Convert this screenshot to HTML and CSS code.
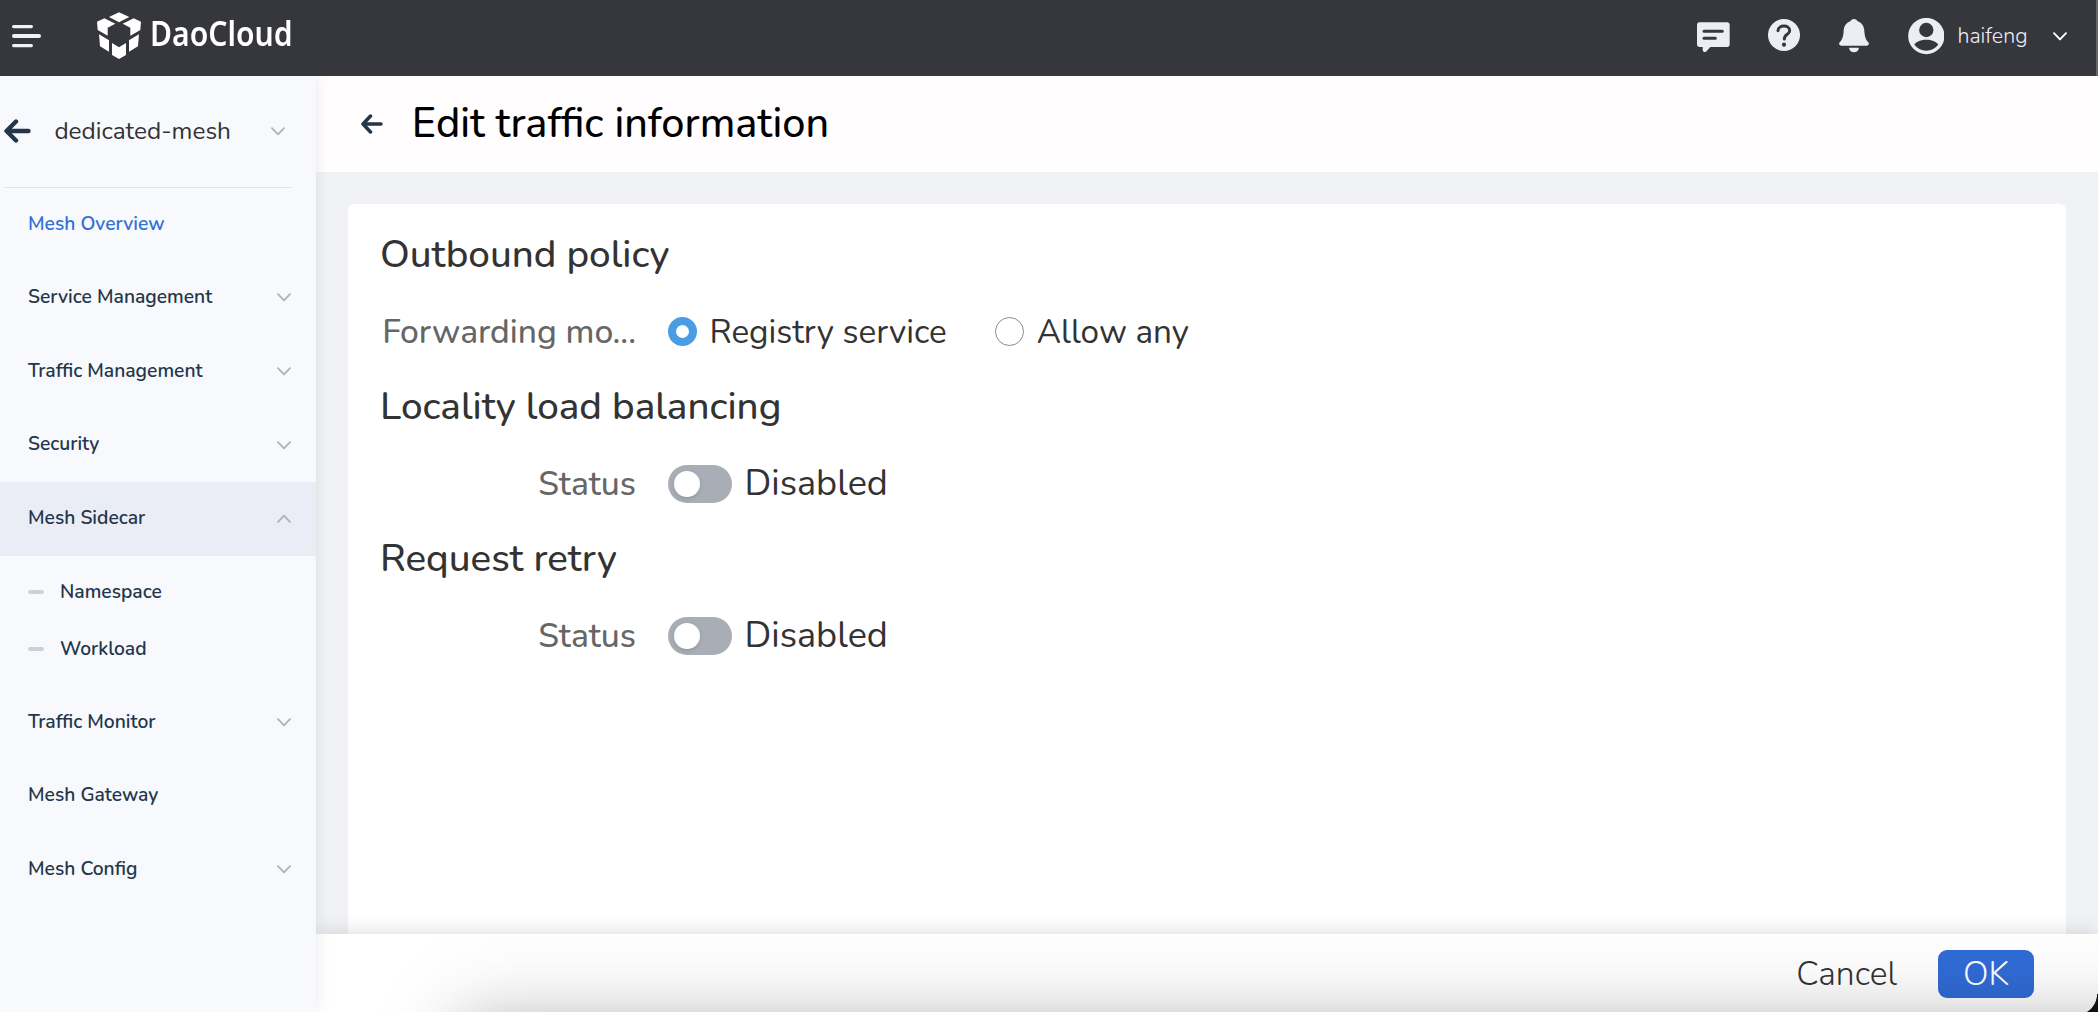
FILE: index.html
```html
<!DOCTYPE html>
<html lang="en">
<head>
<meta charset="utf-8">
<title>Edit traffic information</title>
<link rel="stylesheet" href="styles.css">
</head>
<body>
<svg class="defs" width="0" height="0" aria-hidden="true">
  <symbol id="down" viewBox="0 0 14 9"><path d="M1 1.2 7 7.4 13 1.2" fill="none" stroke="currentColor" stroke-width="1.9" stroke-linecap="round" stroke-linejoin="round"/></symbol>
  <symbol id="up" viewBox="0 0 14 9"><path d="M1 7.8 7 1.6 13 7.8" fill="none" stroke="currentColor" stroke-width="1.9" stroke-linecap="round" stroke-linejoin="round"/></symbol>
</svg>
<header class="topbar">
  <svg class="burger" viewBox="0 0 30 24"><g fill="#f0f2f9"><rect y="1" width="21" height="3.2" rx="1.6"/><rect y="10" width="29" height="4" rx="2"/><rect y="20" width="21" height="3.2" rx="1.6"/></g></svg>
  <svg class="logo" viewBox="291 36 132 142"><g fill="#fff"><path d="M357 37 388 51 357 67 327 51Z"/><path d="M313 55 346 71 323 83V107L293 90 291 65Z"/><path d="M401 55 368 71 391 83V107L421 90 423 65Z"/><path d="M297 103 327 121V155L300 139Z"/><path d="M417 103 387 121V155L414 139Z"/><path d="M336 129 357 142 378 129V165L357 177 336 165Z"/></g></svg>
  <span class="brand">DaoCloud</span>
  <div class="actions">
    <svg class="i-msg" viewBox="112 54 99 120"><path fill="#eceef6" d="M120 67H202Q210 67 210 75V133Q210 141 202 141H152L139 155Q130 159 129 150V141H120Q112 141 112 133V75Q112 67 120 67Z"/><path d="M133 94H188M133 115H167" stroke="#36373c" stroke-width="9" stroke-linecap="round"/></svg>
    <svg class="i-help" viewBox="324 54 96 120"><circle cx="372" cy="105" r="48" fill="#eceef6"/><path d="M354 92C355 73 389 73 389 92C389 104 373 102 373 117" fill="none" stroke="#36373c" stroke-width="9" stroke-linecap="round"/><circle cx="372" cy="134" r="6.3" fill="#36373c"/></svg>
    <svg class="i-bell" viewBox="538 54 90 120"><path fill="#eceef6" d="M583 57C589 57 592 60 594 64C608 69 613 80 614 92C615 108 617 117 626 127C630 133 626 137 621 137H545C540 137 536 133 540 127C549 117 551 108 552 92C553 80 558 69 572 64C574 60 577 57 583 57ZM568 143H598C596 161 570 161 568 143Z"/></svg>
    <svg class="i-user" viewBox="744 54 110 120"><circle cx="799" cy="108" r="54.5" fill="#eceef6"/><circle cx="799" cy="90" r="21.5" fill="#36373c"/><path fill="#36373c" d="M763 134C775 114 823 114 835 134C817 158 781 158 763 134Z"/></svg>
    <span class="user">haifeng</span>
    <svg class="i-down"><use href="#down"/></svg>
  </div>
</header>
<div class="shell">
  <aside class="sidebar">
    <div class="mesh">
      <svg class="back" viewBox="0 0 27 24"><path d="M24.5 12H3M12 2.5 2.5 12 12 21.5" fill="none" stroke="#24364b" stroke-width="4.4" stroke-linecap="round" stroke-linejoin="round"/></svg>
      <span class="mesh-name">dedicated-mesh</span>
      <svg class="chev"><use href="#down"/></svg>
    </div>
    <nav class="menu">
      <a class="item current"><span>Mesh Overview</span></a>
      <a class="item"><span>Service Management</span><svg class="chev"><use href="#down"/></svg></a>
      <a class="item"><span>Traffic Management</span><svg class="chev"><use href="#down"/></svg></a>
      <a class="item"><span>Security</span><svg class="chev"><use href="#down"/></svg></a>
      <a class="item open"><span>Mesh Sidecar</span><svg class="chev"><use href="#up"/></svg></a>
      <div class="submenu">
        <a class="subitem">Namespace</a>
        <a class="subitem">Workload</a>
      </div>
      <a class="item"><span>Traffic Monitor</span><svg class="chev"><use href="#down"/></svg></a>
      <a class="item"><span>Mesh Gateway</span></a>
      <a class="item"><span>Mesh Config</span><svg class="chev"><use href="#down"/></svg></a>
    </nav>
  </aside>
  <main class="main">
    <div class="page-head">
      <svg class="page-back" viewBox="0 0 22 20"><path d="M20 10H2.5M9.5 2 2 10 9.5 18" fill="none" stroke="#24364b" stroke-width="3.5" stroke-linecap="round" stroke-linejoin="round"/></svg>
      <h1>Edit traffic information</h1>
    </div>
    <div class="content">
      <section class="card">
        <h2>Outbound policy</h2>
        <div class="row">
          <span class="label">Forwarding mo...</span>
          <span class="radio on"></span><span class="option first">Registry service</span>
          <span class="radio"></span><span class="option">Allow any</span>
        </div>
        <h2>Locality load balancing</h2>
        <div class="row"><span class="label">Status</span><span class="switch"></span><span class="state">Disabled</span></div>
        <h2>Request retry</h2>
        <div class="row"><span class="label">Status</span><span class="switch"></span><span class="state">Disabled</span></div>
      </section>
    </div>
    <footer class="footer">
      <button class="cancel">Cancel</button>
      <button class="ok">OK</button>
    </footer>
  </main>
</div>
</body>
</html>
```
FILE: styles.css
```css
* { box-sizing: border-box; }
body {
  margin: 0;
  height: 1012px;
  display: flex;
  flex-direction: column;
  overflow: hidden;
  font-family: Nunito, Lato, sans-serif;
  color: #333;
  white-space: nowrap;
}
svg { display: block; flex: none; }
.defs { position: absolute; }

.topbar {
  height: 76px;
  flex: none;
  display: flex;
  align-items: center;
  padding-left: 12px;
  background: #36373c;
  border-right: 2px solid #66676b;
}
.burger { width: 30px; height: 24px; margin-bottom: 4px; }
.logo { width: 44px; height: 47.3px; margin: 0 0 5px 55px; }
.brand {
  width: 141px;
  margin: 0 0 10px 8.5px;
  font: 600 34px "Noto Sans", sans-serif;
  color: #fff;
  transform: scaleX(.885);
  transform-origin: left;
}
.actions { margin-left: auto; width: 399px; display: flex; align-items: center; }
.i-msg { width: 33px; height: 40px; }
.i-help { width: 32px; height: 40px; margin-left: 37.7px; }
.i-bell { width: 30px; height: 40px; margin-left: 39px; }
.i-user { width: 36.6px; height: 40px; margin-left: 39.2px; }
.user { width: 95.5px; margin-left: 13px; padding-bottom: 5px; font-size: 21.4px; font-weight: 350; line-height: 28px; color: #eceef6; }
.i-down { width: 14px; height: 9px; margin-bottom: 3px; color: #fff; }

.shell { flex: 1; min-height: 0; display: flex; }
.sidebar {
  position: relative;
  z-index: 2;
  width: 316px;
  flex: none;
  background: #f7f9fd;
  box-shadow: 0 0 16px rgba(0, 0, 0, .09);
  clip-path: inset(0 -20px 0 0);
}
.chev { width: 14px; height: 9px; color: #b0b3b9; }
.mesh {
  height: 112px;
  display: flex;
  align-items: center;
  margin: 0 24px 0 4px;
  padding: 0 7px 1px 0;
  border-bottom: 1px solid #e2e4e9;
}
.back { width: 27px; height: 24px; }
.mesh-name { flex: 1; margin-left: 23.4px; padding-bottom: 1px; font-size: 24.4px; font-weight: 450; line-height: 32px; }
.item {
  height: 73.6px;
  display: flex;
  align-items: center;
  justify-content: space-between;
  padding: 0 25px 1px 28px;
}
.item, .subitem { font-size: 19.25px; font-weight: 570; line-height: 26px; color: #24364b; }
.item span { padding-bottom: 1.2px; }
.item.current { color: #3370d4; }
.item.open { background: #eaedf6; }
.submenu { padding: 8px 0; }
.subitem { height: 57px; display: flex; align-items: center; padding-left: 28px; }
.subitem::before { content: ""; width: 16px; height: 4px; margin-right: 16px; border-radius: 2px; background: #cdd0da; }

.main { position: relative; flex: 1; display: flex; flex-direction: column; background: #f0f2f6; }
.page-head { height: 96px; flex: none; display: flex; align-items: center; padding: 0 0 1px 45px; background: #fffdfe; }
.page-back { width: 22px; height: 20px; }
h1 { margin: 0 0 1px 28.8px; font-size: 41.4px; font-weight: 550; color: #000; }
.content { flex: 1; padding: 32px 32px 0; }
.card { height: 100%; padding: 13px 32px 0; background: #fff; border-radius: 6px 6px 0 0; }
h2 { margin: 0; height: 76px; font-size: 38.6px; font-weight: 550; line-height: 76px; }
.row { height: 76px; display: flex; align-items: center; padding-top: 1px; }
.label { width: 256px; padding-left: 0; text-align: right; font-size: 33.6px; font-weight: 550; color: #666; }
.radio { width: 29px; height: 29px; margin-left: 32px; border: 1px solid #888b94; border-radius: 50%; background: #fff; }
.radio.on { border: 8px solid #4a9de4; }
.option { margin-left: 12.5px; font-size: 33.3px; }
.option.first { margin-right: 16.5px; }
.switch { width: 64px; height: 38px; margin-left: 32px; padding: 6px; border-radius: 19px; background: #a9aeb6; }
.switch::before { content: ""; display: block; width: 26px; height: 26px; border-radius: 50%; background: #fff; box-shadow: 0 2px 4px rgba(0, 0, 0, .12); }
.state { margin: 0 0 1px 12.5px; font-size: 36.1px; }

.footer {
  position: relative;
  height: 78px;
  flex: none;
  display: flex;
  justify-content: flex-end;
  align-items: flex-start;
  padding: 16px 64px 0 0;
  background: #fff;
  box-shadow: 0 0 20px rgba(0, 0, 0, .15);
  clip-path: inset(-24px 0 0 0);
}
/* soft shade rising from the window's lower edge */
.footer::before {
  content: "";
  position: absolute;
  z-index: 1;
  inset: 0;
  background: linear-gradient(to top, rgba(0,0,0,.124), rgba(0,0,0,.084) 13px, rgba(0,0,0,.052) 26px, rgba(0,0,0,.029) 39px, rgba(0,0,0,.014) 52px, rgba(0,0,0,.002) 78px);
  mask-image: linear-gradient(to right, transparent 50px, rgba(0,0,0,.023) 72px, rgba(0,0,0,.067) 90px, rgba(0,0,0,.159) 108px, rgba(0,0,0,.309) 126px, rgba(0,0,0,.5) 144px, rgba(0,0,0,.69) 162px, rgba(0,0,0,.84) 180px, rgba(0,0,0,.933) 198px, rgba(0,0,0,.977) 216px, #000 250px);
  pointer-events: none;
}
/* rounded window corner */
.footer::after {
  content: "";
  position: absolute;
  z-index: 2;
  right: 0;
  bottom: 0;
  width: 22px;
  height: 18px;
  background: radial-gradient(circle at 0 0, transparent 20.6px, #111 21.4px);
}
button { height: 48px; padding: 0; border: 0; background: none; font: 350 33.6px/47px Nunito, Lato, sans-serif; color: #333; }
.cancel { margin-right: 41px; }
.ok { width: 96px; border-radius: 9px; background: #306bd6; color: #fff; }
```
